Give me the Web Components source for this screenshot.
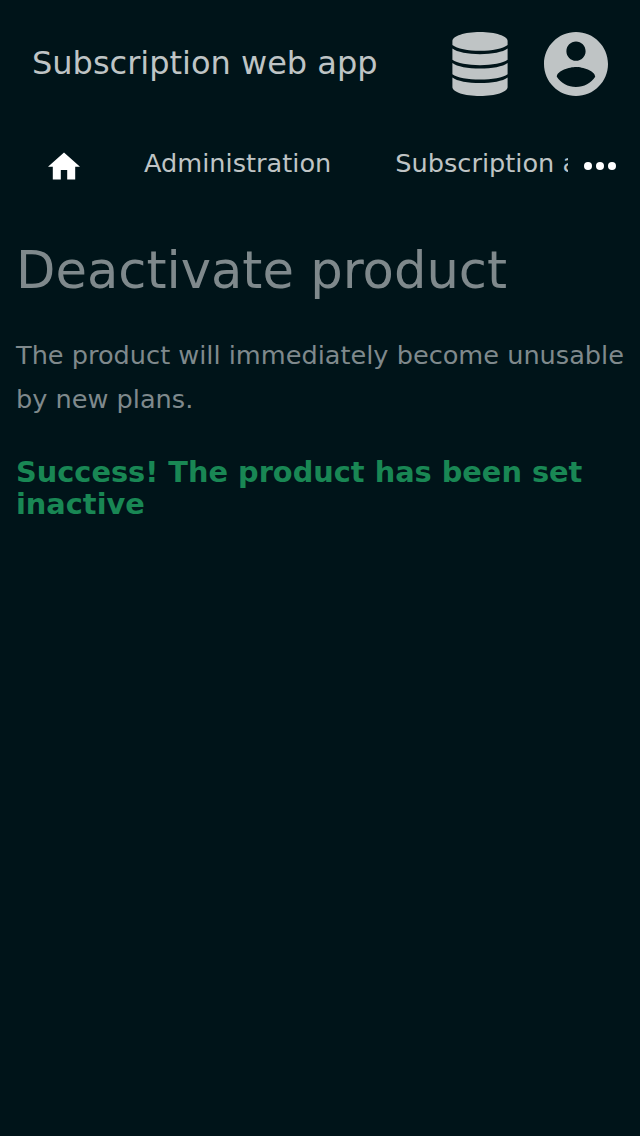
<!DOCTYPE html>
<html lang="en">
<head>
<meta charset="utf-8">
<title>Subscription web app</title>
<style>
html,body{margin:0;background:#001419;font-family:"DejaVu Sans",sans-serif}
</style>
</head>
<body>
<sub-app></sub-app>
<script>
const define = (name, html) => customElements.define(name, class extends HTMLElement {
  constructor() {
    super();
    this.attachShadow({ mode: 'open' }).innerHTML = html;
  }
});

define('app-header', `<style>
:host{display:flex;align-items:center;height:128px;padding:0 32px;box-sizing:border-box;color:#bfc4c5;font-size:32px}
.t{flex:1;white-space:nowrap;margin-top:-2px}
svg{display:block;flex:none;fill:#bfc4c5}
.db{margin-right:36px}
</style>
<div class="t"><slot></slot></div>
<svg class="db" width="56" height="64" viewBox="0 0 56 64"><path d="M.4 9C.4 4 12.500 0 28 0S55.600 4 55.600 9V13C51 16.800 40 18.800 28 18.800S5 16.800 .4 13z"/><path d="M.4 16.600C5 20.200 16 22.200 28 22.200S51 20.200 55.600 16.600V27.800C51 31.300 40 33.200 28 33.200S5 31.300 .4 27.800z"/><path d="M.4 31C5 34.600 16 36.600 28 36.600S51 34.600 55.600 31V42.200C51 45.700 40 47.600 28 47.600S5 45.700 .4 42.200z"/><path d="M.4 45.400C5 49 16 51 28 51S51 49 55.600 45.400V55C55.600 60 43.500 64 28 64S.4 60 .4 55z"/></svg>
<svg width="64" height="64" viewBox="2 2 20 20"><path d="M12 2C6.480 2 2 6.480 2 12s4.480 10 10 10 10-4.480 10-10S17.520 2 12 2zm0 3c1.660 0 3 1.340 3 3s-1.340 3-3 3-3-1.340-3-3 1.340-3 3-3zm0 14.200c-2.500 0-4.710-1.280-6-3.220.030-1.990 4-3.080 6-3.080 1.990 0 5.970 1.090 6 3.080-1.290 1.940-3.500 3.220-6 3.220z"/></svg>`);

define('nav-bar', `<style>
:host{display:flex;height:72px;font-size:25.6px;color:#bfc4c5}
.items{width:568px;box-sizing:border-box;padding-left:48px;display:flex;overflow:hidden;white-space:nowrap;gap:64px;line-height:71px}
svg{display:block;fill:#fff;flex:none}
.more{margin:34px 0 0 16px}
.home{margin-top:24px}
</style>
<div class="items"><svg class="home" width="32" height="28" viewBox="2 3 20 17"><path d="M10 20v-6h4v6h5v-8h3L12 3 2 12h3v8z"/></svg><slot></slot></div>
<svg class="more" width="32" height="8"><circle cx="4" cy="4" r="4"/><circle cx="16" cy="4" r="4"/><circle cx="28" cy="4" r="4"/></svg>`);

define('nav-item', `<style>:host{display:block;flex:none}</style><slot></slot>`);

define('page-content', `<style>
:host{display:block;padding:0 16px;color:#7f898c}
h1{font-size:51.2px;font-weight:400;line-height:60px;margin:40px 0 0}
p{font-size:25.6px;line-height:44px;margin:33px 0 0}
.s{font-size:28.8px;line-height:32px;font-weight:700;color:#198754;margin-top:35px}
</style>
<h1><slot name="title"></slot></h1><p><slot></slot></p><div class="s"><slot name="status"></slot></div>`);

define('sub-app', `<style>:host{display:block;min-height:1136px;background:#001419}</style>
<app-header>Subscription web app</app-header>
<nav-bar><nav-item>Administration</nav-item><nav-item>Subscription admin</nav-item></nav-bar>
<page-content><span slot="title">Deactivate product</span>The product will immediately become unusable by new plans.<span slot="status">Success! The product has been set inactive</span></page-content>`);
</script>
</body>
</html>
